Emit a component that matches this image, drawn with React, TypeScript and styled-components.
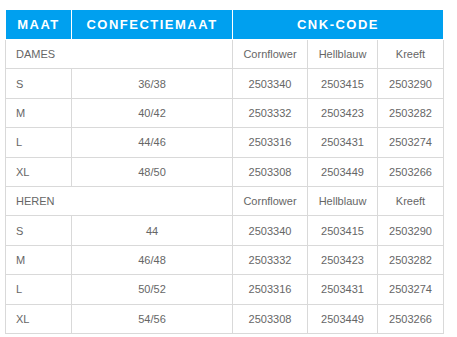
import React from 'react';
import styled, { createGlobalStyle } from 'styled-components';

const GlobalStyle = createGlobalStyle`
    body {
        margin: 0;
        background: #fff;
        font-family: "Liberation Sans", Arial, sans-serif;
    }
`;

const Wrapper = styled.div`
    padding: 10px 0 0 5px;
`;

const Table = styled.table`
    border-collapse: collapse;
    table-layout: fixed;
    width: 438px;
    font-size: 11px;
    color: #666;
`;

const HeadCell = styled.th`
    background: #00a0ef;
    color: #fff;
    font-size: 13px;
    font-weight: bold;
    letter-spacing: 1.5px;
    text-transform: uppercase;
    text-align: center;
    height: 29px;
    padding: 0;
    border: 1px solid #fff;
    border-top: none;
`;

const Cell = styled.td<{ $left?: boolean }>`
    height: 28.4px;
    padding: 0 0 0 ${(p) => (p.$left ? '10px' : '0')};
    text-align: ${(p) => (p.$left ? 'left' : 'center')};
    border: 1px solid #d9d9d9;
    vertical-align: middle;
`;

interface SizeRow {
    maat: string;
    confectie: string;
    codes: string[];
}

interface Group {
    name: string;
    rows: SizeRow[];
}

const colours = ['Cornflower', 'Hellblauw', 'Kreeft'];

const groups: Group[] = [
    {
        name: 'DAMES',
        rows: [
            { maat: 'S', confectie: '36/38', codes: ['2503340', '2503415', '2503290'] },
            { maat: 'M', confectie: '40/42', codes: ['2503332', '2503423', '2503282'] },
            { maat: 'L', confectie: '44/46', codes: ['2503316', '2503431', '2503274'] },
            { maat: 'XL', confectie: '48/50', codes: ['2503308', '2503449', '2503266'] },
        ],
    },
    {
        name: 'HEREN',
        rows: [
            { maat: 'S', confectie: '44', codes: ['2503340', '2503415', '2503290'] },
            { maat: 'M', confectie: '46/48', codes: ['2503332', '2503423', '2503282'] },
            { maat: 'L', confectie: '50/52', codes: ['2503316', '2503431', '2503274'] },
            { maat: 'XL', confectie: '54/56', codes: ['2503308', '2503449', '2503266'] },
        ],
    },
];

const App: React.FC = () => {
    return (
        <>
            <GlobalStyle />
            <Wrapper>
                <Table>
                    <colgroup>
                        <col style={{ width: 66 }} />
                        <col style={{ width: 161 }} />
                        <col style={{ width: 75 }} />
                        <col style={{ width: 70 }} />
                        <col style={{ width: 66 }} />
                    </colgroup>
                    <thead>
                        <tr>
                            <HeadCell>Maat</HeadCell>
                            <HeadCell>Confectiemaat</HeadCell>
                            <HeadCell colSpan={3}>CNK-code</HeadCell>
                        </tr>
                    </thead>
                    <tbody>
                        {groups.map((group) => (
                            <React.Fragment key={group.name}>
                                <tr>
                                    <Cell $left colSpan={2}>{group.name}</Cell>
                                    {colours.map((c) => (
                                        <Cell key={c}>{c}</Cell>
                                    ))}
                                </tr>
                                {group.rows.map((row) => (
                                    <tr key={group.name + row.maat}>
                                        <Cell $left>{row.maat}</Cell>
                                        <Cell>{row.confectie}</Cell>
                                        {row.codes.map((code) => (
                                            <Cell key={code}>{code}</Cell>
                                        ))}
                                    </tr>
                                ))}
                            </React.Fragment>
                        ))}
                    </tbody>
                </Table>
            </Wrapper>
        </>
    );
};

export default App;
